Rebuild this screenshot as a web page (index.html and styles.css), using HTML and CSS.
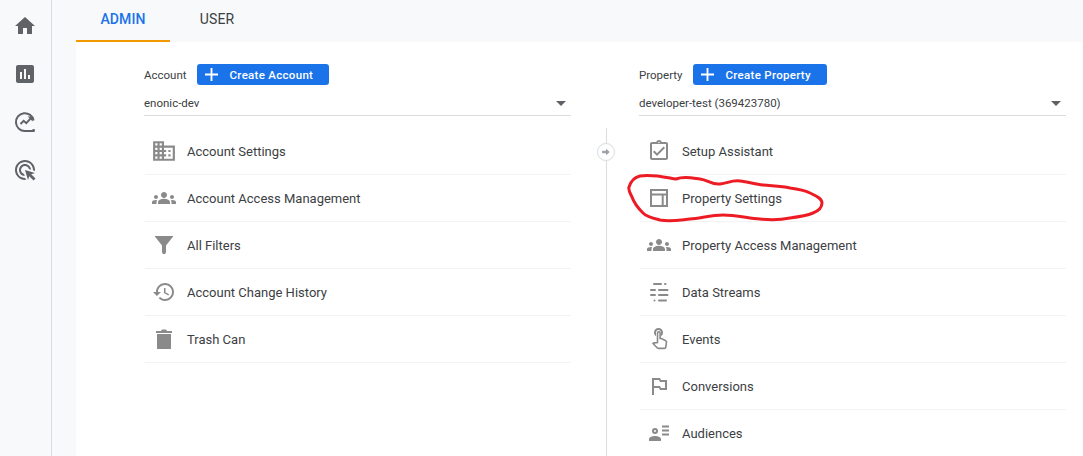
FILE: index.html
```html
<!DOCTYPE html>
<html lang="en">
<head>
  <meta charset="UTF-8">
  <title>Admin</title>
  <link rel="stylesheet" href="styles.css">
</head>
<body>
  <nav class="sidebar">
    <svg class="side-icon" viewBox="0 0 24 24"><path d="M10 20v-6h4v6h5v-8h3L12 3 2 12h3v8z"/></svg>
    <svg class="side-icon" viewBox="0 0 24 24"><path d="M19 3H5c-1.1 0-2 .9-2 2v14c0 1.1.9 2 2 2h14c1.1 0 2-.9 2-2V5c0-1.1-.9-2-2-2zM9 17H7v-7h2v7zm4 0h-2V7h2v10zm4 0h-2v-4h2v4z"/></svg>
    <svg class="side-icon" viewBox="0 0 24 24"><path class="line" d="M20.6 10.5A8.9 8.9 0 1 0 12 21h8.6v-2"/><path class="line" d="M7.5 14l3.2-3.2 2.6 2.4 4.2-4.6"/><path d="M14.6 6.6h5v5z"/><circle cx="20.6" cy="20.6" r="1.1"/></svg>
    <svg class="side-icon" viewBox="0 0 24 24"><path d="M11.71 17.99C8.53 17.84 6 15.22 6 12c0-3.31 2.69-6 6-6 3.22 0 5.84 2.53 5.99 5.71l-2.1-.63C15.48 9.31 13.89 8 12 8c-2.21 0-4 1.79-4 4 0 1.89 1.31 3.48 3.08 3.89l.63 2.1zM22 12c0 .3-.01.6-.04.9l-1.97-.59c.01-.1.01-.21.01-.31 0-4.42-3.58-8-8-8s-8 3.58-8 8 3.58 8 8 8c.1 0 .21 0 .31-.01l.59 1.97c-.3.03-.6.04-.9.04-5.52 0-10-4.48-10-10S6.48 2 12 2s10 4.48 10 10zm-3.77 4.26L22 15l-10-3 3 10 1.26-3.77 4.27 4.27 1.98-1.98-4.28-4.26z"/></svg>
  </nav>

  <div class="main">
    <div class="tabs">
      <div class="tab active">ADMIN</div>
      <div class="tab">USER</div>
    </div>

    <div class="content">
      <section class="column">
        <div class="col-head">
          <span class="col-label">Account</span>
          <button class="create-btn"><svg viewBox="0 0 14 14"><path d="M6 0h2v6h6v2H8v6H6V8H0V6h6z"/></svg>Create Account</button>
        </div>
        <div class="picker"><span>enonic-dev</span><i class="caret"></i></div>
        <ul class="menu">
          <li><svg class="icon" viewBox="1 2 22 20"><path d="M12 7V3H2v18h20V7H12zM6 19H4v-2h2v2zm0-4H4v-2h2v2zm0-4H4V9h2v2zm0-4H4V5h2v2zm4 12H8v-2h2v2zm0-4H8v-2h2v2zm0-4H8V9h2v2zm0-4H8V5h2v2zm10 12h-8v-2h2v-2h-2v-2h2v-2h-2V9h8v10zm-2-8h-2v2h2v-2zm0 4h-2v2h2v-2z"/></svg>Account Settings</li>
          <li><svg class="icon" viewBox="0 0 24 24"><path d="M12 12.75c1.63 0 3.07.39 4.24.9 1.08.48 1.76 1.56 1.76 2.73V18H6v-1.61c0-1.18.68-2.26 1.76-2.73 1.17-.52 2.61-.91 4.24-.91zM4 13c1.1 0 2-.9 2-2s-.9-2-2-2-2 .9-2 2 .9 2 2 2zm1.13 1.1c-.37-.06-.74-.1-1.13-.1-.99 0-1.93.21-2.78.58C.48 14.9 0 15.62 0 16.43V18h4.5v-1.61c0-.83.23-1.61.63-2.29zM20 13c1.1 0 2-.9 2-2s-.9-2-2-2-2 .9-2 2 .9 2 2 2zm4 3.43c0-.81-.48-1.53-1.22-1.85-.85-.37-1.79-.58-2.78-.58-.39 0-.76.04-1.13.1.4.68.63 1.46.63 2.29V18H24v-1.57zM12 6c1.66 0 3 1.34 3 3s-1.34 3-3 3-3-1.34-3-3 1.34-3 3-3z"/></svg>Account Access Management</li>
          <li><svg class="icon" viewBox="0 0 24 24"><path d="M2.500 3h19L14 12.500V19l-.8 2h-2.400l-.8-2v-6.500z"/></svg>All Filters</li>
          <li><svg class="icon" viewBox="0 0 24 24"><path d="M13 3c-4.970 0-9 4.030-9 9H1l3.890 3.890.07.14L9 12H6c0-3.870 3.130-7 7-7s7 3.130 7 7-3.130 7-7 7c-1.930 0-3.680-.79-4.940-2.060l-1.420 1.420C8.270 19.990 10.510 21 13 21c4.970 0 9-4.030 9-9s-4.030-9-9-9zm-1 5v5l4.280 2.540.72-1.210-3.500-2.080V8H12z"/></svg>Account Change History</li>
          <li><svg class="icon" viewBox="0 0 24 24"><path d="M5 22h14V7H5zM20 4h-5l-1-1.500h-4L9 4H4v2h16z"/></svg>Trash Can</li>
        </ul>
      </section>

      <div class="divider"><span class="divider-dot"><svg viewBox="0 0 12 12"><path d="M1.500 4.500h4.500V2l4.500 4-4.500 4V7.500H1.500z"/></svg></span></div>

      <section class="column">
        <div class="col-head">
          <span class="col-label">Property</span>
          <button class="create-btn"><svg viewBox="0 0 14 14"><path d="M6 0h2v6h6v2H8v6H6V8H0V6h6z"/></svg>Create Property</button>
        </div>
        <div class="picker"><span>developer-test (369423780)</span><i class="caret"></i></div>
        <ul class="menu">
          <li><svg class="icon" viewBox="0 0 24 24"><path d="M18 9l-1.410-1.420L10 14.170l-2.590-2.580L6 13l4 4zm1-6h-4.180C14.400 1.840 13.300 1 12 1c-1.300 0-2.400.84-2.820 2H5c-1.100 0-2 .9-2 2v14c0 1.100.9 2 2 2h14c1.100 0 2-.9 2-2V5c0-1.100-.9-2-2-2zm-7-.25c.41 0 .75.34.75.75s-.34.75-.75.75-.75-.34-.75-.75.34-.75.75-.75zM19 19H5V5h14v14z"/></svg>Setup Assistant</li>
          <li><svg class="icon" viewBox="0 0 24 24"><path class="line" d="M4 4h16v16H4zM4 8.500h16M15.700 8.500V20"/></svg>Property Settings</li>
          <li><svg class="icon" viewBox="0 0 24 24"><path d="M12 12.75c1.63 0 3.07.39 4.24.9 1.08.48 1.76 1.56 1.76 2.73V18H6v-1.61c0-1.18.68-2.26 1.76-2.73 1.17-.52 2.61-.91 4.24-.91zM4 13c1.1 0 2-.9 2-2s-.9-2-2-2-2 .9-2 2 .9 2 2 2zm1.13 1.1c-.37-.06-.74-.1-1.13-.1-.99 0-1.93.21-2.78.58C.48 14.9 0 15.62 0 16.43V18h4.5v-1.61c0-.83.23-1.61.63-2.29zM20 13c1.1 0 2-.9 2-2s-.9-2-2-2-2 .9-2 2 .9 2 2 2zm4 3.43c0-.81-.48-1.53-1.22-1.85-.85-.37-1.79-.58-2.78-.58-.39 0-.76.04-1.13.1.4.68.63 1.46.63 2.29V18H24v-1.57zM12 6c1.66 0 3 1.34 3 3s-1.34 3-3 3-3-1.34-3-3 1.34-3 3-3z"/></svg>Property Access Management</li>
          <li><svg class="icon" viewBox="0 0 24 24"><path class="line round" d="M7 4h7M18 4h.5M4 10h4M12 10h8.500M4 15h4M12 15h8.500M7.500 20.500h0M12 20.500h7"/></svg>Data Streams</li>
          <li><svg class="icon" viewBox="0 0 24 24"><path d="M9 11.240V7.500C9 6.120 10.120 5 11.500 5S14 6.120 14 7.500v3.740c1.210-.81 2-2.180 2-3.740C16 5.010 13.990 3 11.500 3S7 5.010 7 7.500c0 1.560.79 2.930 2 3.740z" transform="translate(0 -2)"/><path class="line thin" d="M10.500 15.500V6a1.300 1.300 0 0 1 2.600 0v5.500h1.300l4.300 2.200c.6.3.9.8.8 1.400l-.7 5c-.1.8-.6 1.300-1.400 1.300h-6c-.4 0-.7-.1-1-.4L6 16.500c.4-.5 1-.7 1.500-.6z"/></svg>Events</li>
          <li><svg class="icon" viewBox="0 0 24 24"><path d="M14 6l-1-2H5v17h2v-7h5l1 2h7V6h-6zm4 8h-4l-1-2H7V6h5l1 2h5v6z"/></svg>Conversions</li>
          <li><svg class="icon" viewBox="0 0 24 24"><circle class="line" cx="8" cy="10" r="2"/><path d="M2 20v-2c0-1.800 3.500-3 6-3s6 1.200 6 3v2z"/><path class="line" d="M15 5.500h7M15 9.500h7M15 13.500h7"/></svg>Audiences</li>
        </ul>
      </section>
    </div>
  </div>

  <!-- hand drawn marker around Property Settings -->
  <svg class="scribble" viewBox="0 0 1083 456"><path d="M640 176C652 174 664 177 676 179C684 176 692 178 700 179C708 180 712 185 720 184C728 183 732 180 740 181C748 182 755 184 763 185C772 186 781 186 790 188C798 189 804 190 810 193C816 196 822 198 822 203C822 208 818 211 813 213C806 216 798 217 790 218C780 220 770 220 760 219C748 218 735 215 723 215C712 215 701 218 690 219C680 220 670 222 660 220C652 218 647 217 643 213C638 208 634 203 632 197C630 193 628 190 629 187C631 181 635 177 640 176Z"/></svg>
</body>
</html>
```
FILE: styles.css
```css
* {
  box-sizing: border-box;
}

html, body {
  height: 100%;
}

body {
  margin: 0;
  display: flex;
  overflow: hidden;
  background-color: #f8f9fa;
  color: #3c4043;
  font-family: Roboto, 'Liberation Sans', sans-serif;
}

.sidebar {
  width: 52px;
  flex: none;
  border-right: 1px solid #dadce0;
  padding: 14px 0 0 13px;
  display: flex;
  flex-direction: column;
  gap: 24px;
}

.side-icon {
  width: 24px;
  height: 24px;
  fill: #5f6368;
}

.line {
  fill: none;
  stroke: currentColor;
  stroke-width: 2;
}

.side-icon .line {
  color: #5f6368;
}

.icon .line {
  color: #8a8a8a;
}

.line.round {
  stroke-linecap: round;
}

.line.thin {
  stroke-width: 1.6;
}

.main {
  flex: 1;
  display: flex;
  flex-direction: column;
  min-width: 0;
}

.tabs {
  height: 42px;
  flex: none;
  display: flex;
  padding-left: 24px;
}

.tab {
  width: 94px;
  padding-top: 11px;
  text-align: center;
  font-size: 14px;
  letter-spacing: 0.1px;
}

.tab.active {
  color: #1a73e8;
  font-weight: 500;
  border-bottom: 2px solid #f29900;
}

.content {
  flex: 1;
  margin-left: 24px;
  padding: 22px 0 0 68px;
  background-color: #fff;
  display: grid;
  grid-template-columns: 427px 68px 427px;
}

.col-head {
  height: 21px;
  display: flex;
  align-items: center;
  gap: 10px;
}

.col-label {
  font-size: 11.5px;
  color: #3c4043;
}

.create-btn {
  height: 21px;
  padding: 0 16px 0 8px;
  display: flex;
  align-items: center;
  gap: 12px;
  background-color: #1a73e8;
  color: #fff;
  border: none;
  border-radius: 3px;
  font-family: inherit;
  font-size: 11.5px;
  font-weight: 500;
  letter-spacing: 0.3px;
}

.create-btn svg {
  width: 13px;
  height: 13px;
  fill: #fff;
}

.picker {
  height: 31px;
  display: flex;
  align-items: center;
  justify-content: space-between;
  padding: 6px 5px 0 0;
  border-bottom: 1px solid #dadce0;
  font-size: 11.5px;
  color: #3c4043;
}

.caret {
  border-left: 5px solid transparent;
  border-right: 5px solid transparent;
  border-top: 5px solid #5f6368;
}

.menu {
  list-style: none;
  margin: 12px 0 0 1px;
  padding: 0;
}

.menu li {
  height: 47px;
  display: flex;
  align-items: center;
  gap: 11px;
  padding-left: 7px;
  border-bottom: 1px solid #f1f3f4;
  font-size: 13px;
  color: #3c4043;
}

.icon {
  width: 24px;
  height: 24px;
  flex: none;
  fill: #8a8a8a;
}

.divider {
  position: relative;
  width: 1px;
  justify-self: center;
  margin: 64px 0 0 2px;
  background-color: #dadce0;
}

.divider-dot {
  position: absolute;
  left: -9px;
  top: 15px;
  width: 18px;
  height: 18px;
  display: flex;
  align-items: center;
  justify-content: center;
  background-color: #fff;
  border: 1px solid #dadce0;
  border-radius: 50%;
}

.divider-dot svg {
  width: 10px;
  height: 10px;
  fill: #9aa0a6;
}

.scribble {
  position: absolute;
  left: 0;
  top: 0;
  width: 1083px;
  height: 456px;
  pointer-events: none;
}

.scribble path {
  fill: none;
  stroke: #ed1c24;
  stroke-width: 3;
  stroke-linejoin: round;
}
```
